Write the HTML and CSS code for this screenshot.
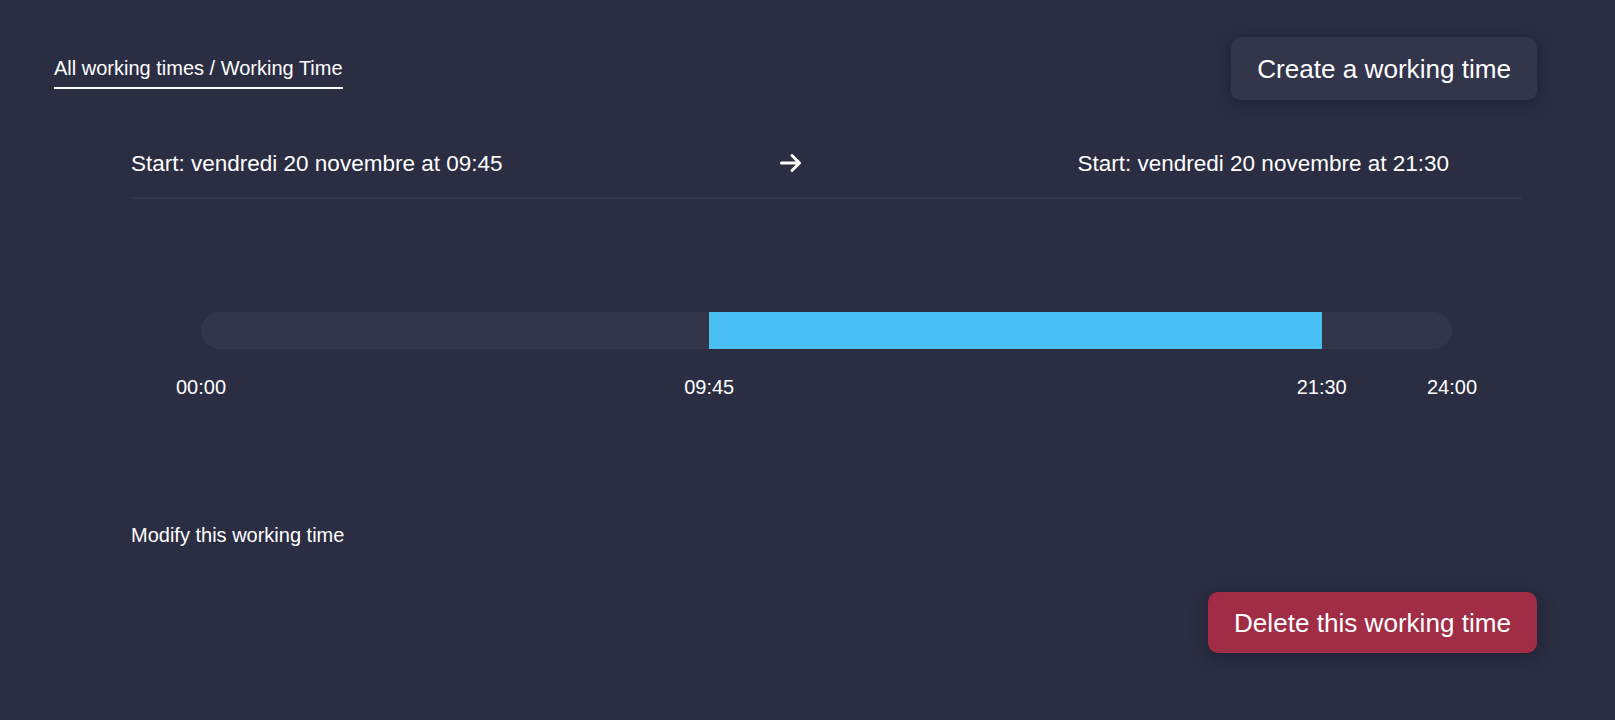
FILE: index.html
```html
<!DOCTYPE html>
<html lang="en">
<head>
<meta charset="utf-8">
<title>Working Time</title>
<link rel="stylesheet" href="styles.css">
</head>
<body>
<div class="page">
  <header class="header">
    <a class="breadcrumb">All working times / Working Time</a>
    <button class="btn btn-create">Create a working time</button>
  </header>

  <main class="main">
    <div class="period">
      <span class="period-text">Start: vendredi 20 novembre at 09:45</span>
      <svg class="arrow" viewBox="0 64 448 384" width="21" height="18" aria-hidden="true">
        <path fill="#ffffff" d="M438.6 278.6c12.5-12.5 12.5-32.8 0-45.3l-160-160c-12.5-12.5-32.8-12.5-45.3 0s-12.5 32.8 0 45.3L338.8 224 32 224c-17.7 0-32 14.3-32 32s14.3 32 32 32l306.7 0L233.4 393.4c-12.5 12.5-12.5 32.8 0 45.3s32.8 12.5 45.3 0l160-160z"/>
      </svg>
      <span class="period-text">Start: vendredi 20 novembre at 21:30</span>
    </div>

    <section class="timeline">
      <div class="bar">
        <div class="bar-fill" style="margin-left:40.625%;width:48.958%"></div>
      </div>
      <div class="scale">
        <span class="tick" style="left:0%">00:00</span>
        <span class="tick" style="left:40.625%">09:45</span>
        <span class="tick" style="left:89.583%">21:30</span>
        <span class="tick" style="left:100%">24:00</span>
      </div>
    </section>

    <p class="modify">Modify this working time</p>
  </main>

  <footer class="footer">
    <button class="btn btn-delete">Delete this working time</button>
  </footer>
</div>
</body>
</html>
```

FILE: styles.css
```css
html, body {
  margin: 0;
  padding: 0;
}

body {
  background: #2b2d42;
  color: #ffffff;
  font-family: "Liberation Sans", Arial, sans-serif;
  height: 720px;
  overflow: hidden;
}

.page {
  padding: 37px 78px 0 54px;
}

.header {
  display: flex;
  justify-content: space-between;
  align-items: flex-start;
}

.breadcrumb {
  margin-top: 20px;
  font-size: 20px;
  line-height: 23px;
  color: #ffffff;
  padding-bottom: 7px;
  border-bottom: 2px solid #ffffff;
  cursor: pointer;
}

.btn {
  font-family: "Liberation Sans", Arial, sans-serif;
  font-size: 26.1px;
  line-height: 30px;
  color: #ffffff;
  border: none;
  border-radius: 10px;
  padding: 16px 26px;
  box-shadow: 0 4px 18px rgba(10, 11, 22, 0.35);
  cursor: pointer;
}

.btn-create {
  background: #33354b;
  padding-top: 16.5px;
  padding-bottom: 16.5px;
}

.btn-delete {
  background: #a12c45;
  padding-top: 15.5px;
  padding-bottom: 15.5px;
}

.main {
  margin: 51px 15px 0 77px;
}

.period {
  display: flex;
  justify-content: space-between;
  align-items: center;
  padding: 0 73px 20px 0;
  border-bottom: 2px solid #33354a;
}

.period-text {
  font-size: 22.5px;
  line-height: 26px;
}

.arrow {
  display: block;
  margin-top: -3px;
}

.timeline {
  margin: 113px 70px 0 70px;
}

.bar {
  display: flex;
  height: 37px;
  background: #33354b;
  border-radius: 18.5px;
  overflow: hidden;
}

.bar-fill {
  height: 100%;
  background: #48bef2;
}

.scale {
  position: relative;
  height: 23px;
  margin-top: 27px;
}

.tick {
  position: absolute;
  top: 0;
  font-size: 20px;
  line-height: 23px;
  transform: translateX(-50%);
  white-space: nowrap;
}

.modify {
  margin: 125px 0 0 0;
  font-size: 20px;
  line-height: 23px;
}

.footer {
  display: flex;
  justify-content: flex-end;
  margin-top: 45px;
}
```
